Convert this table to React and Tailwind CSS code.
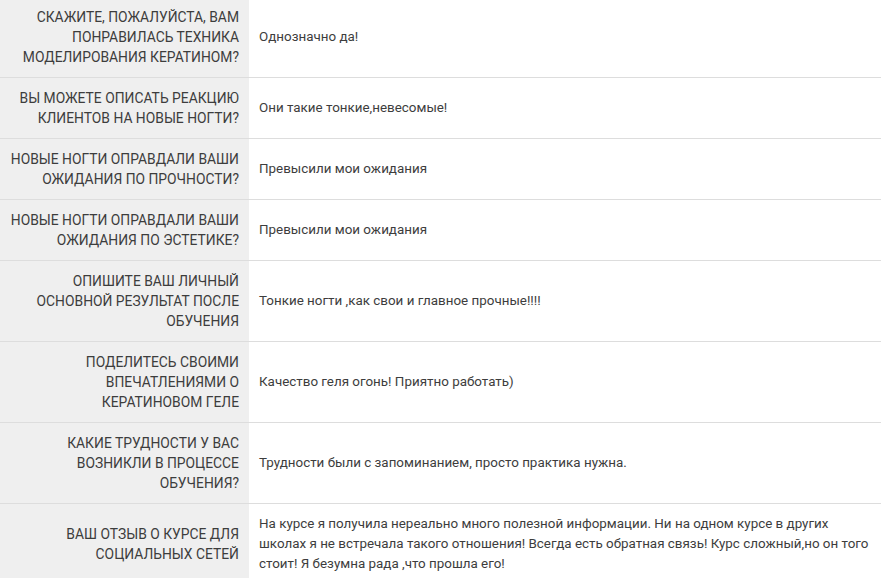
import React from "react";

const rows = [
  ["СКАЖИТЕ, ПОЖАЛУЙСТА, ВАМ ПОНРАВИЛАСЬ ТЕХНИКА МОДЕЛИРОВАНИЯ КЕРАТИНОМ?", "Однозначно да!"],
  ["ВЫ МОЖЕТЕ ОПИСАТЬ РЕАКЦИЮ КЛИЕНТОВ НА НОВЫЕ НОГТИ?", "Они такие тонкие,невесомые!"],
  ["НОВЫЕ НОГТИ ОПРАВДАЛИ ВАШИ ОЖИДАНИЯ ПО ПРОЧНОСТИ?", "Превысили мои ожидания"],
  ["НОВЫЕ НОГТИ ОПРАВДАЛИ ВАШИ ОЖИДАНИЯ ПО ЭСТЕТИКЕ?", "Превысили мои ожидания"],
  ["ОПИШИТЕ ВАШ ЛИЧНЫЙ ОСНОВНОЙ РЕЗУЛЬТАТ ПОСЛЕ ОБУЧЕНИЯ", "Тонкие ногти ,как свои и главное прочные!!!!"],
  ["ПОДЕЛИТЕСЬ СВОИМИ ВПЕЧАТЛЕНИЯМИ О КЕРАТИНОВОМ ГЕЛЕ", "Качество геля огонь! Приятно работать)"],
  ["КАКИЕ ТРУДНОСТИ У ВАС ВОЗНИКЛИ В ПРОЦЕССЕ ОБУЧЕНИЯ?", "Трудности были с запоминанием, просто практика нужна."],
  ["ВАШ ОТЗЫВ О КУРСЕ ДЛЯ СОЦИАЛЬНЫХ СЕТЕЙ", "На курсе я получила нереально много полезной информации. Ни на одном курсе в других школах я не встречала такого отношения! Всегда есть обратная связь! Курс сложный,но он того стоит! Я безумна рада ,что прошла его!"],
];

export default function App() {
  return (
    <div className="w-[881px] h-[578px] overflow-hidden bg-white font-['Roboto',sans-serif] text-[13.4px] leading-[20px] text-[#3d3d3d]">
      <div className="-mt-[3px] flex flex-col">
        {rows.map(([q, a], i) => (
          <div key={i} className={"flex " + (i > 0 ? "border-t border-[#ddd]" : "")}>
            <div className="w-[249px] shrink-0 bg-[#efefef] pl-[6px] pr-[10px] py-[10px] text-right text-[13.85px] flex items-center justify-end">
              <span>{q}</span>
            </div>
            <div className="flex-1 pl-[10px] pr-[4px] py-[10px] flex items-center">
              <span>{a}</span>
            </div>
          </div>
        ))}
      </div>
    </div>
  );
}
